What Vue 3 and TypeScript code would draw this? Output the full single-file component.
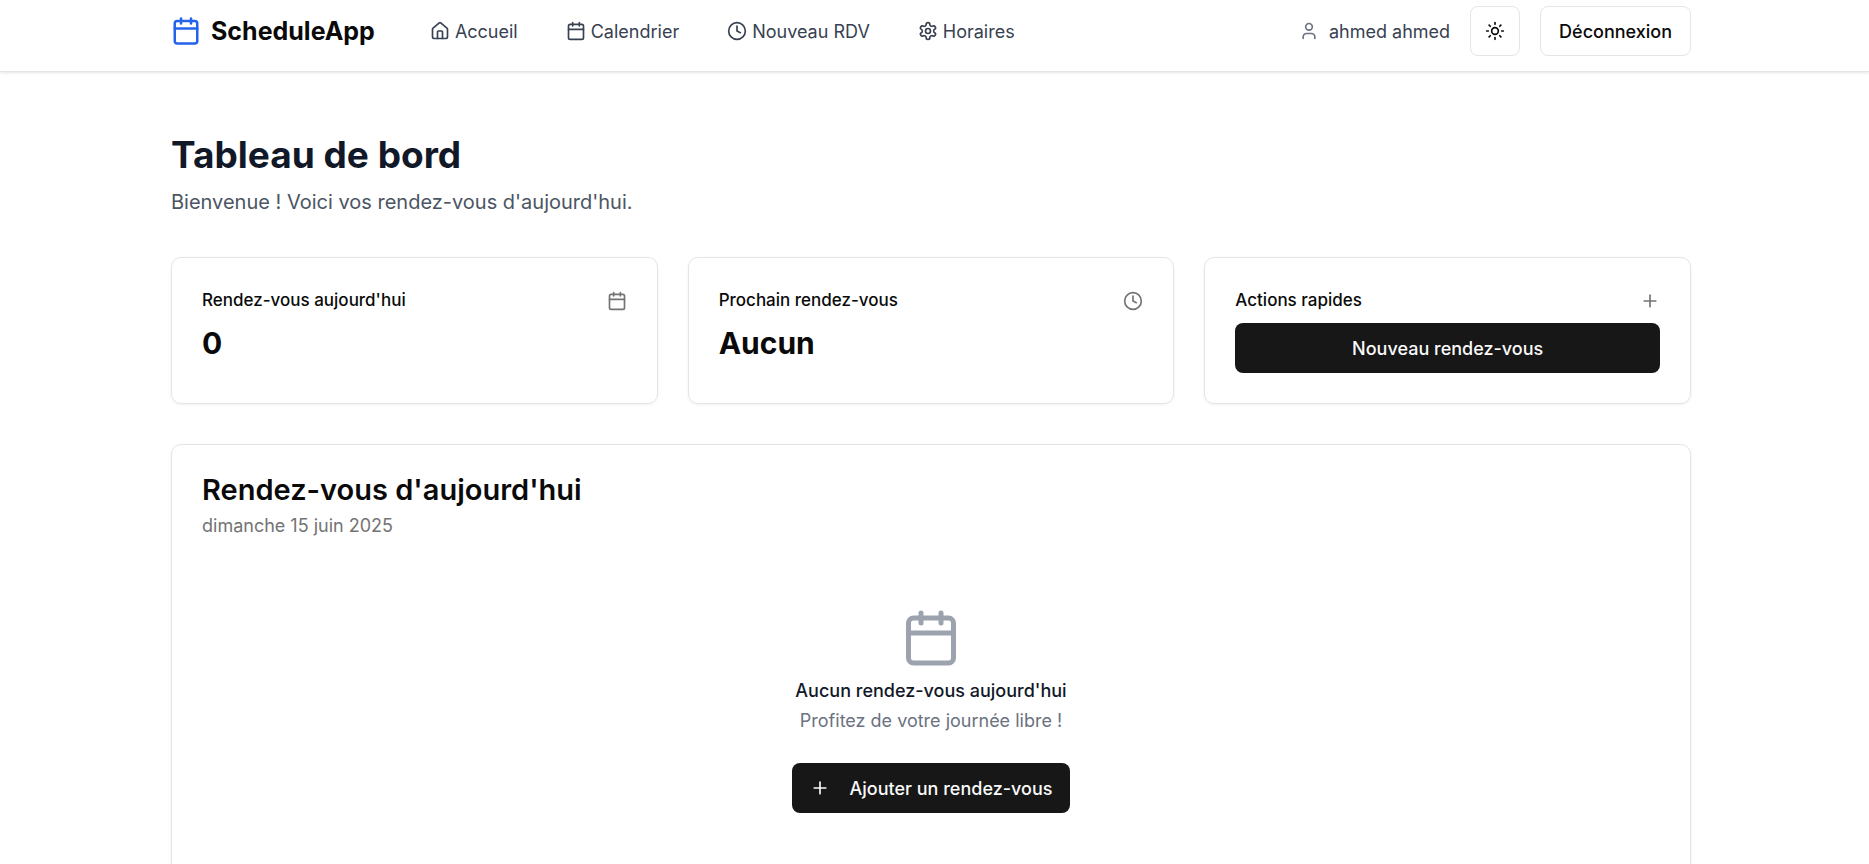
<script setup lang="ts">
import { h, type FunctionalComponent } from 'vue'

type Shape = [string, Record<string, string>]
type IconName = 'calendar' | 'home' | 'clock' | 'settings' | 'user' | 'sun' | 'plus'

const shapes: Record<IconName, Shape[]> = {
  calendar: [
    ['path', { d: 'M8 2v4' }],
    ['path', { d: 'M16 2v4' }],
    ['rect', { width: '18', height: '18', x: '3', y: '4', rx: '2' }],
    ['path', { d: 'M3 10h18' }],
  ],
  home: [
    ['path', { d: 'M15 21v-8a1 1 0 0 0-1-1h-4a1 1 0 0 0-1 1v8' }],
    ['path', { d: 'M3 10a2 2 0 0 1 .709-1.528l7-5.999a2 2 0 0 1 2.582 0l7 5.999A2 2 0 0 1 21 10v9a2 2 0 0 1-2 2H5a2 2 0 0 1-2-2z' }],
  ],
  clock: [
    ['circle', { cx: '12', cy: '12', r: '10' }],
    ['polyline', { points: '12 6 12 12 16 14' }],
  ],
  settings: [
    ['path', { d: 'M12.22 2h-.44a2 2 0 0 0-2 2v.18a2 2 0 0 1-1 1.73l-.43.25a2 2 0 0 1-2 0l-.15-.08a2 2 0 0 0-2.73.73l-.22.38a2 2 0 0 0 .73 2.73l.15.1a2 2 0 0 1 1 1.72v.51a2 2 0 0 1-1 1.74l-.15.09a2 2 0 0 0-.73 2.73l.22.38a2 2 0 0 0 2.73.73l.15-.08a2 2 0 0 1 2 0l.43.25a2 2 0 0 1 1 1.73V20a2 2 0 0 0 2 2h.44a2 2 0 0 0 2-2v-.18a2 2 0 0 1 1-1.73l.43-.25a2 2 0 0 1 2 0l.15.08a2 2 0 0 0 2.73-.73l.22-.39a2 2 0 0 0-.73-2.73l-.15-.08a2 2 0 0 1-1-1.74v-.5a2 2 0 0 1 1-1.74l.15-.09a2 2 0 0 0 .73-2.73l-.22-.38a2 2 0 0 0-2.73-.73l-.15.08a2 2 0 0 1-2 0l-.43-.25a2 2 0 0 1-1-1.73V4a2 2 0 0 0-2-2z' }],
    ['circle', { cx: '12', cy: '12', r: '3' }],
  ],
  user: [
    ['path', { d: 'M19 21v-2a4 4 0 0 0-4-4H9a4 4 0 0 0-4 4v2' }],
    ['circle', { cx: '12', cy: '7', r: '4' }],
  ],
  sun: [
    ['circle', { cx: '12', cy: '12', r: '4' }],
    ['path', { d: 'M12 2v2M12 20v2M4.93 4.93l1.41 1.41M17.66 17.66l1.41 1.41M2 12h2M20 12h2M6.34 17.66l-1.41 1.41M19.07 4.93l-1.41 1.41' }],
  ],
  plus: [
    ['path', { d: 'M5 12h14' }],
    ['path', { d: 'M12 5v14' }],
  ],
}

const Icon: FunctionalComponent<{ name: IconName }> = (props) =>
  h(
    'svg',
    {
      viewBox: '0 0 24 24',
      fill: 'none',
      stroke: 'currentColor',
      'stroke-width': '2',
      'stroke-linecap': 'round',
      'stroke-linejoin': 'round',
      'aria-hidden': 'true',
    },
    shapes[props.name].map(([tag, attrs]) => h(tag, attrs)),
  )
Icon.props = ['name']

const links: { label: string; icon: IconName }[] = [
  { label: 'Accueil', icon: 'home' },
  { label: 'Calendrier', icon: 'calendar' },
  { label: 'Nouveau RDV', icon: 'clock' },
  { label: 'Horaires', icon: 'settings' },
]

const cards: { title: string; icon: IconName; value?: string; action?: string }[] = [
  { title: "Rendez-vous aujourd'hui", icon: 'calendar', value: '0' },
  { title: 'Prochain rendez-vous', icon: 'clock', value: 'Aucun' },
  { title: 'Actions rapides', icon: 'plus', action: 'Nouveau rendez-vous' },
]
</script>

<template>
  <div class="page">
    <header class="header">
      <div class="container bar">
        <a href="#" class="brand"><Icon name="calendar" class="icon icon-brand" />ScheduleApp</a>
        <nav class="nav" aria-label="Navigation principale">
          <a v-for="link in links" :key="link.label" href="#" class="nav-link">
            <Icon :name="link.icon" class="icon" />{{ link.label }}
          </a>
        </nav>
        <div class="account">
          <span class="user"><Icon name="user" class="icon" />ahmed ahmed</span>
          <button type="button" class="btn btn-outline btn-square" aria-label="Changer de thème">
            <Icon name="sun" class="icon" />
          </button>
          <button type="button" class="btn btn-outline">Déconnexion</button>
        </div>
      </div>
    </header>

    <main class="container main">
      <h1>Tableau de bord</h1>
      <p class="lead">Bienvenue ! Voici vos rendez-vous d'aujourd'hui.</p>

      <div class="cards">
        <section v-for="card in cards" :key="card.title" class="card">
          <div class="card-head">
            <h2 class="card-title">{{ card.title }}</h2>
            <Icon :name="card.icon" class="icon" />
          </div>
          <p v-if="card.value" class="value">{{ card.value }}</p>
          <button v-if="card.action" type="button" class="btn btn-dark">{{ card.action }}</button>
        </section>
      </div>

      <section class="card agenda">
        <h2 class="agenda-title">Rendez-vous d'aujourd'hui</h2>
        <p class="date">dimanche 15 juin 2025</p>
        <div class="empty">
          <Icon name="calendar" class="icon icon-empty" />
          <h3>Aucun rendez-vous aujourd'hui</h3>
          <p class="hint">Profitez de votre journée libre !</p>
          <button type="button" class="btn btn-dark btn-add">
            <Icon name="plus" class="icon" />Ajouter un rendez-vous
          </button>
        </div>
      </section>
    </main>
  </div>
</template>

<style>
body {
  margin: 0;
}
</style>

<style scoped>
.page {
  padding-right: 7px;
  background: #fff;
  color: #0a0a0a;
  font-family: Inter, 'Liberation Sans', sans-serif;
  font-size: 18px;
  line-height: 25px;
}
h1, h2, h3, p {
  margin: 0;
}
a {
  color: inherit;
  text-decoration: none;
}
.container {
  box-sizing: border-box;
  max-width: 1600px;
  margin: 0 auto;
  padding: 0 40px;
}
.header {
  margin-right: -7px;
  padding-right: 7px;
  border-bottom: 1px solid #e5e5e5;
  box-shadow: 0 1px 3px rgba(0, 0, 0, 0.1);
}
.bar {
  display: flex;
  align-items: center;
  padding-top: 6px;
  padding-bottom: 15px;
}
.icon {
  width: 20px;
  height: 20px;
  flex: none;
}
.brand {
  display: flex;
  align-items: center;
  gap: 10px;
  font-size: 25px;
  font-weight: 700;
}
.icon-brand {
  width: 30px;
  height: 30px;
  color: #2563eb;
}
.nav {
  display: flex;
  gap: 48px;
  margin-left: 55px;
}
.nav-link {
  display: flex;
  align-items: center;
  gap: 5px;
  color: #374151;
}
.account {
  display: flex;
  align-items: center;
  gap: 20px;
  margin-left: auto;
}
.user {
  display: flex;
  align-items: center;
  gap: 10px;
  color: #374151;
}
.user .icon {
  color: #6b7280;
}
.btn {
  display: flex;
  align-items: center;
  justify-content: center;
  box-sizing: border-box;
  height: 50px;
  padding: 0 18px;
  border: 0;
  border-radius: 8px;
  font: inherit;
  font-weight: 500;
  cursor: pointer;
}
.btn-outline {
  border: 1px solid #e5e5e5;
  background: #fff;
  color: #0a0a0a;
}
.btn-square {
  width: 50px;
  padding: 0;
}
.btn-dark {
  width: 100%;
  background: #171717;
  color: #fafafa;
}
.main {
  padding-top: 60px;
}
h1 {
  color: #111827;
  font-size: 37px;
  font-weight: 700;
  line-height: 45px;
}
.lead {
  margin-top: 10px;
  color: #4b5563;
  font-size: 20px;
  line-height: 30px;
}
.cards {
  display: grid;
  grid-template-columns: repeat(3, 1fr);
  gap: 30px;
  margin-top: 40px;
}
.card {
  padding: 30px;
  border: 1px solid #e5e5e5;
  border-radius: 10px;
  box-shadow: 0 1px 3px rgba(0, 0, 0, 0.06);
}
.card-head {
  display: flex;
  align-items: center;
  justify-content: space-between;
  margin-bottom: 10px;
}
.card-head .icon {
  color: #737373;
}
.card-title {
  font-size: 17px;
  font-weight: 500;
}
.value {
  font-size: 30px;
  font-weight: 700;
  line-height: 40px;
}
.agenda {
  margin-top: 40px;
}
.agenda-title {
  font-size: 29px;
  font-weight: 600;
  line-height: 30px;
}
.date {
  margin-top: 8px;
  color: #737373;
}
.empty {
  display: flex;
  flex-direction: column;
  align-items: center;
  margin-top: 70px;
  padding-bottom: 40px;
}
.icon-empty {
  width: 60px;
  height: 60px;
  color: #9ca3af;
}
h3 {
  margin-top: 10px;
  color: #111827;
  font-size: 18px;
  font-weight: 500;
}
.hint {
  margin-top: 5px;
  color: #6b7280;
}
.btn-add {
  width: auto;
  gap: 20px;
  margin-top: 30px;
}
</style>
